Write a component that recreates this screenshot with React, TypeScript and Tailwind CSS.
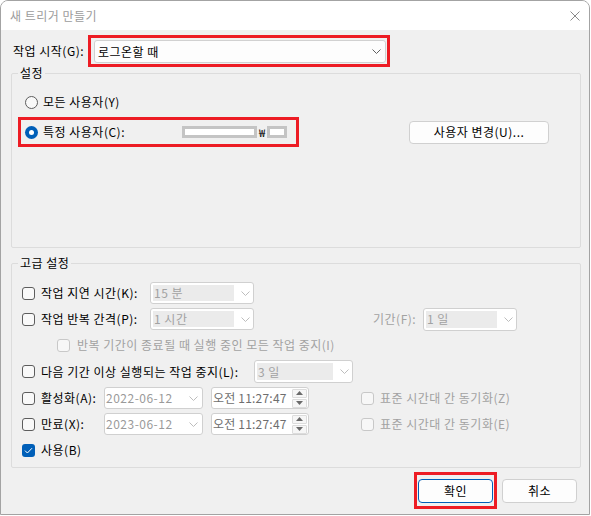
import clsx from 'clsx';

function Chevron({ muted }: { muted?: boolean }) {
  return (
    <svg width="9" height="5" viewBox="0 0 9 5" className="shrink-0">
      <path
        d="M0.5 0.5 L4.5 4.5 L8.5 0.5"
        fill="none"
        stroke={muted ? '#bdbdbd' : '#606060'}
        strokeWidth="1"
      />
    </svg>
  );
}

function CheckBox({ checked, disabled }: { checked?: boolean; disabled?: boolean }) {
  if (checked) {
    return (
      <span className="flex h-[13px] w-[13px] shrink-0 items-center justify-center rounded-[3px] bg-[#005fb8]">
        <svg width="9" height="7" viewBox="0 0 9 7">
          <path d="M1 3.6 L3.4 6 L8 1.2" fill="none" stroke="#ffffff" strokeWidth="1" />
        </svg>
      </span>
    );
  }
  return (
    <span
      className={clsx(
        'block h-[13px] w-[13px] shrink-0 rounded-[3px] border',
        disabled ? 'border-[#c8c8c8] bg-[#f7f7f7]' : 'border-[#5d5d5d] bg-[#f9f9f9]'
      )}
    />
  );
}

function Radio({ checked }: { checked?: boolean }) {
  if (checked) {
    return (
      <span className="flex h-[13px] w-[13px] shrink-0 items-center justify-center rounded-full bg-[#005fb8]">
        <span className="block h-[5px] w-[5px] rounded-full bg-white" />
      </span>
    );
  }
  return <span className="block h-[13px] w-[13px] shrink-0 rounded-full border border-[#5d5d5d] bg-[#f9f9f9]" />;
}

// disabled combo with the grey edit field inside
function GreyCombo({ value, className }: { value: string; className: string }) {
  return (
    <div
      className={clsx(
        'flex shrink-0 items-center rounded-[3px] border border-[#d0d0d0] bg-white py-[2px] pl-[2px] pr-[3px]',
        className
      )}
    >
      <div className="flex h-full flex-1 items-center bg-[#ebebeb] pl-[1px] text-[#a2a2a2]">{value}</div>
      <div className="ml-[7px]">
        <Chevron muted />
      </div>
    </div>
  );
}

function DateCombo({ value }: { value: string }) {
  return (
    <div className="flex h-[22px] w-[99px] shrink-0 items-center justify-between rounded-[3px] border border-[#d0d0d0] bg-white pl-[1px] pr-[4px] text-[#9a9a9a]">
      <span>{value}</span>
      <Chevron muted />
    </div>
  );
}

function TimeBox() {
  return (
    <div className="ml-[8px] flex h-[22px] w-[98px] shrink-0 items-center justify-between rounded-[3px] border border-[#d0d0d0] bg-white pl-[1px] pr-[1px] text-[#6e6e6e]">
      <span className="tracking-[0.2px]">오전 11:27:47</span>
      <div className="flex flex-col gap-[1px]">
        <span className="flex h-[9px] w-[15px] items-center justify-center rounded-[1px] border border-[#dcdcdc] bg-[#f6f6f6]">
          <svg width="7" height="4" viewBox="0 0 7 4">
            <path d="M0 4 L3.5 0 L7 4 Z" fill="#6a6a6a" />
          </svg>
        </span>
        <span className="flex h-[9px] w-[15px] items-center justify-center rounded-[1px] border border-[#dcdcdc] bg-[#f6f6f6]">
          <svg width="7" height="4" viewBox="0 0 7 4">
            <path d="M0 0 L7 0 L3.5 4 Z" fill="#6a6a6a" />
          </svg>
        </span>
      </div>
    </div>
  );
}

function Masked({ className }: { className: string }) {
  return <span className={clsx('block h-[12px] shrink-0 border-[3px] border-[#c4c4c4] bg-white', className)} />;
}

export default function App() {
  return (
    <div className="h-[516px] w-[591px] bg-white font-['Noto_Sans_CJK_KR','Noto_Sans',sans-serif] text-[12px] leading-[16px] tracking-[0.5px] text-black">
      <div className="flex h-[515px] w-[590px] flex-col overflow-hidden rounded-t-[8px] border border-[#a3a3a3] bg-[#f0f0f0]">
        {/* title bar */}
        <div className="flex h-[29px] shrink-0 items-center justify-between bg-white pl-[9px] pr-[9px]">
          <span className="text-[#9c9c9c]">새 트리거 만들기</span>
          <svg width="10" height="10" viewBox="0 0 10 10">
            <path d="M0.5 0.5 L9.5 9.5 M9.5 0.5 L0.5 9.5" stroke="#8a8a8a" strokeWidth="1" />
          </svg>
        </div>

        <div className="flex flex-1 flex-col">
          {/* start trigger */}
          <div className="mt-[5px] flex items-center">
            <div className="w-[87px] pl-[12px]">작업 시작(G):</div>
            <div className="flex h-[32px] w-[302px] border-[3px] border-[#ed1c24] pl-[3px] pt-[2px]">
              <div className="flex h-[23px] w-[292px] items-center justify-between rounded-[3px] border border-[#d1d1d1] bg-[#fdfdfd] pl-[3px] pr-[4px]">
                <span>로그온할 때</span>
                <Chevron />
              </div>
            </div>
          </div>

          {/* settings */}
          <fieldset className="ml-[10px] w-[570px] rounded-[2px] border border-[#dcdcdc]">
            <legend className="ml-[6px] px-[2px] leading-[12px]">설정</legend>
            <div className="h-[168px] pl-[13px] pt-[15px]">
              <div className="flex h-[16px] items-center gap-[5px]">
                <Radio />
                <span>모든 사용자(Y)</span>
              </div>
              <div className="mt-[7px] flex items-center">
                <div className="-ml-[7px] flex h-[30px] w-[281px] items-center border-[3px] border-[#ed1c24] pl-[4px]">
                  <Radio checked />
                  <span className="ml-[5px] w-[139px]">특정 사용자(C):</span>
                  <Masked className="w-[75px]" />
                  <span className="w-[10px] text-center text-[11px] leading-[12px] tracking-normal">₩</span>
                  <Masked className="w-[20px]" />
                </div>
                <button className="ml-[110px] flex h-[23px] w-[140px] items-center justify-center rounded-[4px] border border-[#d0d0d0] bg-[#fdfdfd]">
                  사용자 변경(U)...
                </button>
              </div>
            </div>
          </fieldset>

          {/* advanced settings */}
          <fieldset className="ml-[10px] mt-[9px] w-[570px] rounded-[2px] border border-[#dcdcdc]">
            <legend className="ml-[6px] px-[2px] leading-[12px]">고급 설정</legend>
            <div className="pb-[6px] pl-[10px]">
              <div className="mt-[13px] flex h-[22px] items-center">
                <div className="flex w-[128px] items-center gap-[6px]">
                  <CheckBox />
                  <span>작업 지연 시간(K):</span>
                </div>
                <GreyCombo value="15 분" className="h-[22px] w-[104px]" />
              </div>

              <div className="mt-[4px] flex h-[22px] items-center">
                <div className="flex w-[128px] items-center gap-[6px]">
                  <CheckBox />
                  <span>작업 반복 간격(P):</span>
                </div>
                <GreyCombo value="1 시간" className="h-[22px] w-[104px]" />
                <span className="ml-[119px] w-[50px] text-[#a2a2a2]">기간(F):</span>
                <GreyCombo value="1 일" className="h-[23px] w-[94px]" />
              </div>

              <div className="mt-[4px] flex h-[22px] items-center gap-[7px] pl-[35px]">
                <CheckBox disabled />
                <span className="text-[#a2a2a2]">반복 기간이 종료될 때 실행 중인 모든 작업 중지(I)</span>
              </div>

              <div className="mt-[4px] flex h-[23px] items-center">
                <div className="flex w-[232px] items-center gap-[6px]">
                  <CheckBox />
                  <span>다음 기간 이상 실행되는 작업 중지(L):</span>
                </div>
                <GreyCombo value="3 일" className="h-[23px] w-[99px]" />
              </div>

              <div className="mt-[4px] flex h-[22px] items-center">
                <div className="flex w-[82px] items-center gap-[6px]">
                  <CheckBox />
                  <span>활성화(A):</span>
                </div>
                <DateCombo value="2022-06-12" />
                <TimeBox />
                <div className="ml-[52px] flex items-center gap-[6px]">
                  <CheckBox disabled />
                  <span className="text-[#a2a2a2]">표준 시간대 간 동기화(Z)</span>
                </div>
              </div>

              <div className="mt-[4px] flex h-[22px] items-center">
                <div className="flex w-[82px] items-center gap-[6px]">
                  <CheckBox />
                  <span>만료(X):</span>
                </div>
                <DateCombo value="2023-06-12" />
                <TimeBox />
                <div className="ml-[52px] flex items-center gap-[6px]">
                  <CheckBox disabled />
                  <span className="text-[#a2a2a2]">표준 시간대 간 동기화(E)</span>
                </div>
              </div>

              <div className="mt-[4px] flex h-[22px] items-center gap-[6px]">
                <CheckBox checked />
                <span>사용(B)</span>
              </div>
            </div>
          </fieldset>

          {/* dialog buttons */}
          <div className="mt-[4px] flex items-center justify-end gap-[5px] pr-[12px]">
            <div className="flex h-[37px] w-[83px] items-center justify-center border-[3px] border-[#ed1c24]">
              <button className="flex h-[24px] w-[75px] items-center justify-center rounded-[4px] border border-[#005fb8] bg-[#fdfdfd]">
                확인
              </button>
            </div>
            <button className="flex h-[24px] w-[75px] items-center justify-center rounded-[4px] border border-[#d0d0d0] bg-[#fdfdfd]">
              취소
            </button>
          </div>
        </div>
      </div>
    </div>
  );
}
